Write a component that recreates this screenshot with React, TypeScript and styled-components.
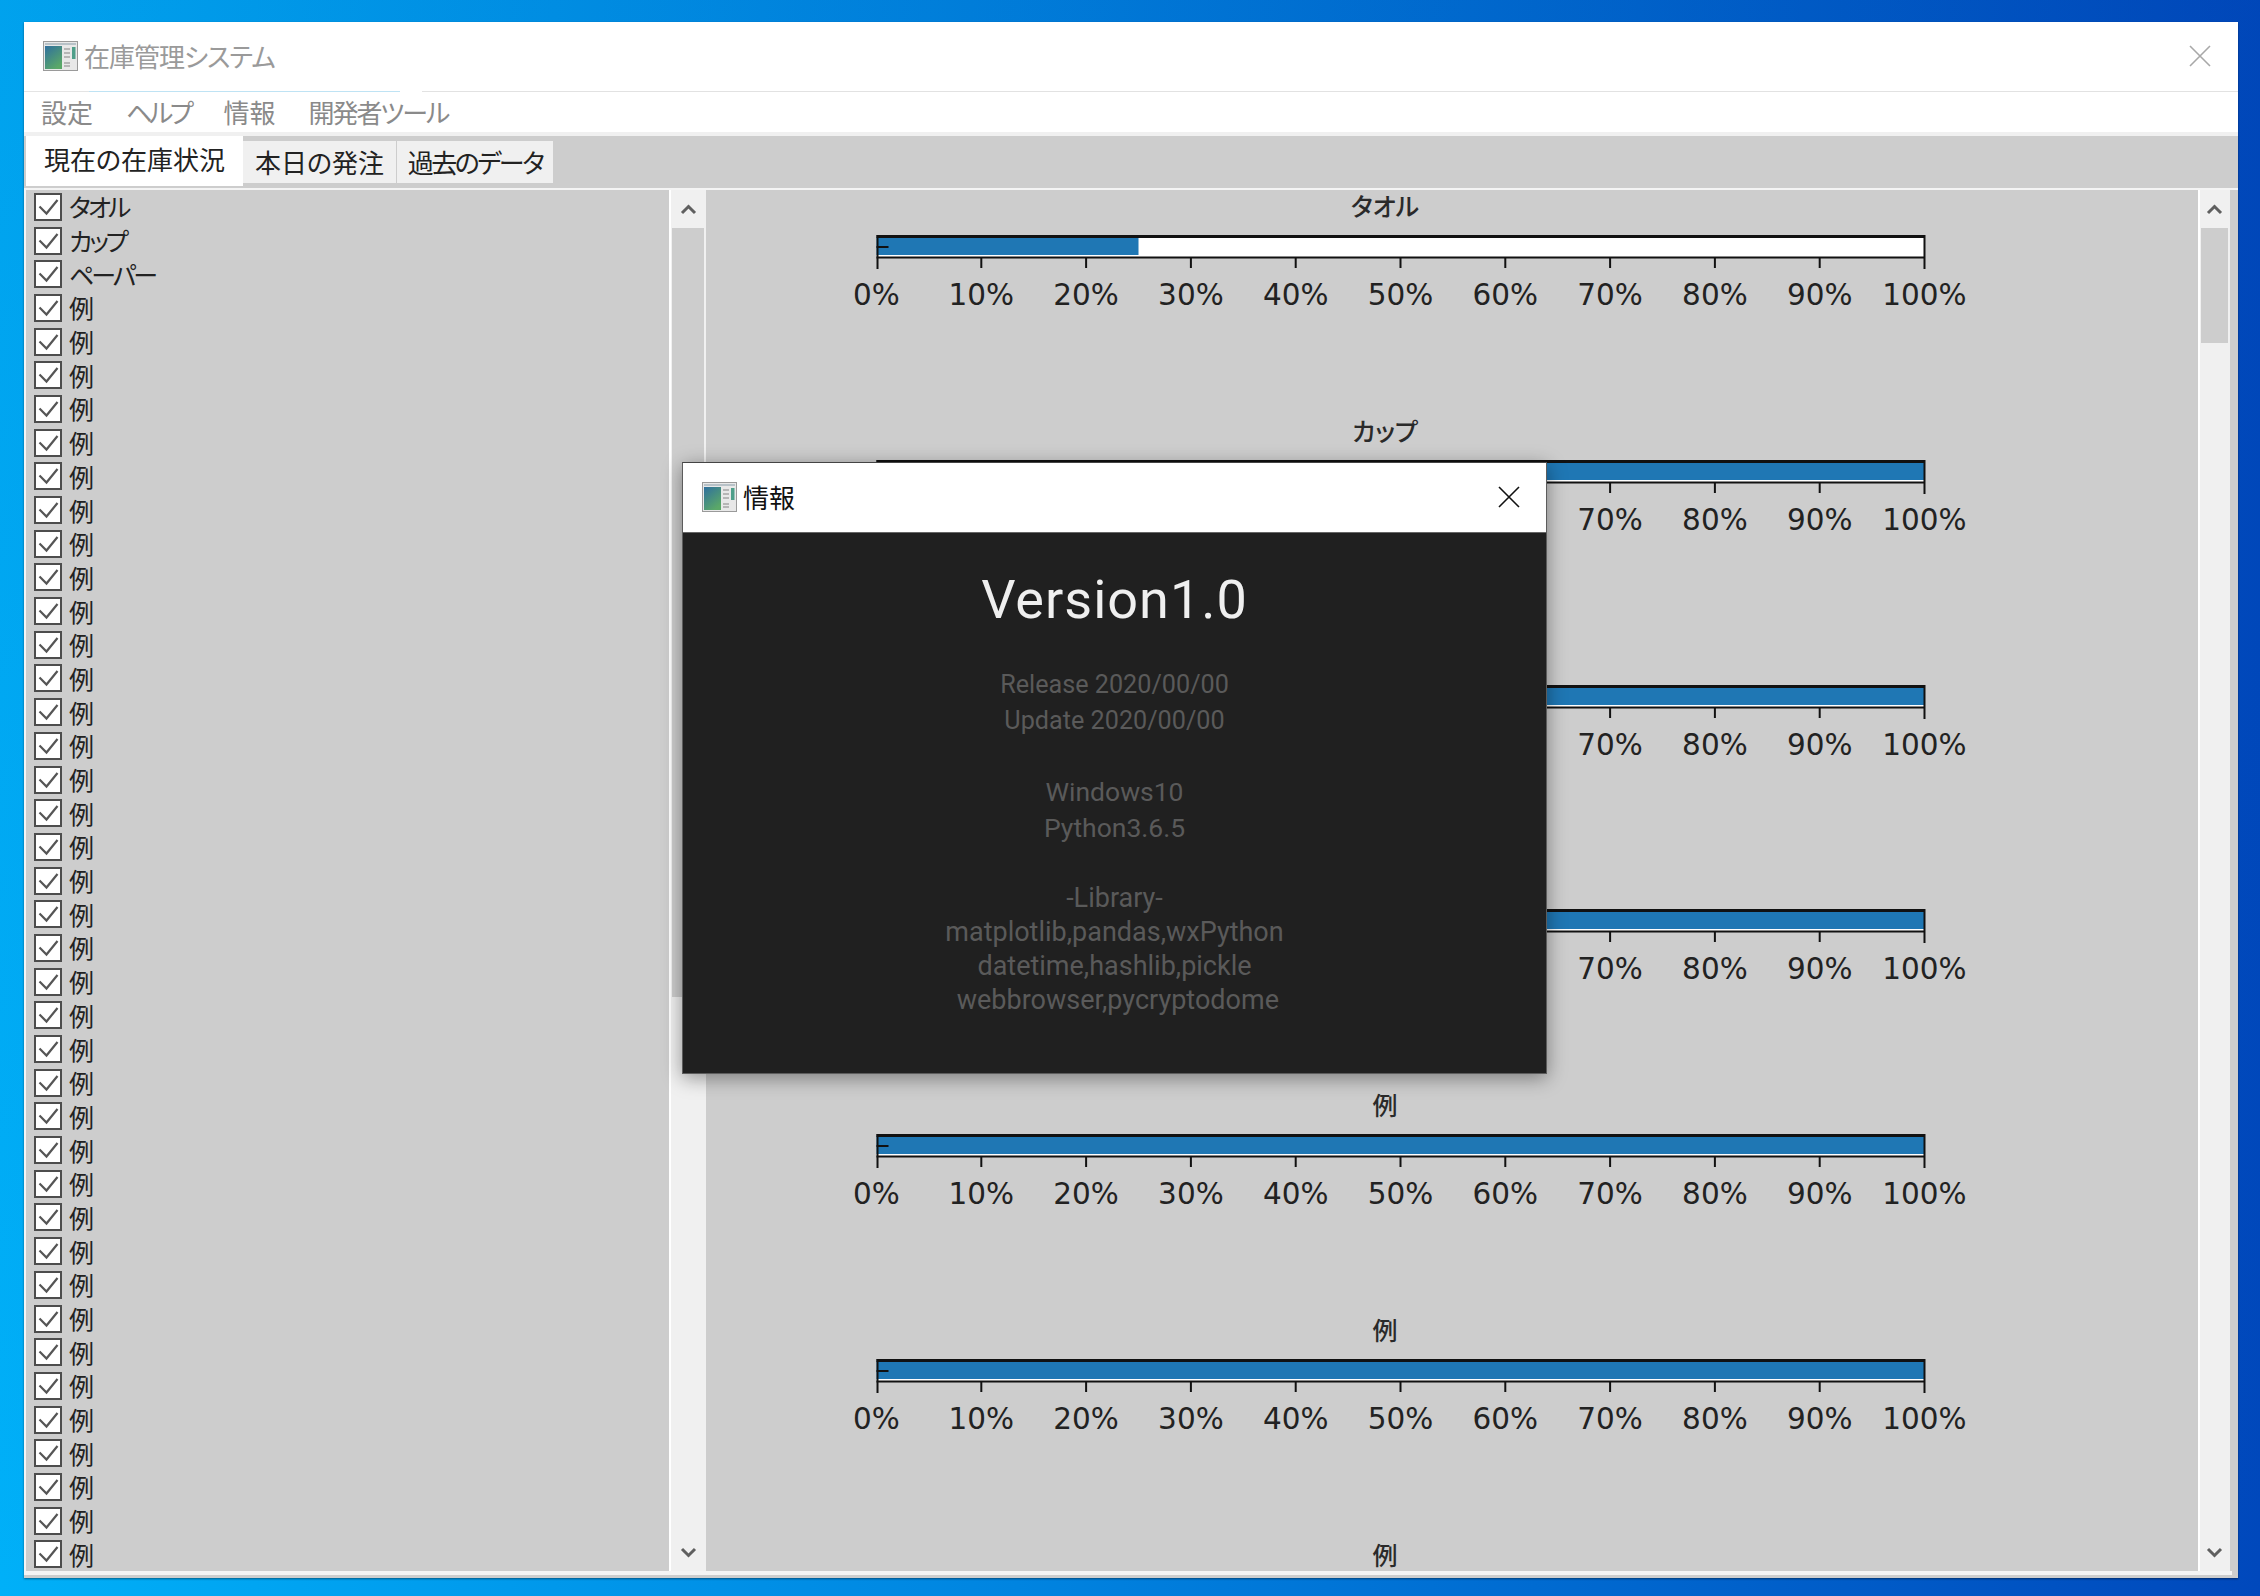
import React from "react";
import styled, { createGlobalStyle } from "styled-components";

const cjk = `"Noto Sans CJK JP", "Noto Sans", sans-serif`;

const Global = createGlobalStyle`
  *, *::before, *::after { box-sizing: border-box; }
  html, body { margin: 0; padding: 0; }
  body { width: 2260px; height: 1596px; overflow: hidden; font-family: ${cjk}; }
`;

const Desktop = styled.div`
  position: relative;
  width: 2260px;
  height: 1596px;
  padding: 22px 22px 18px 24px;
  background:
    linear-gradient(to bottom, rgba(0, 60, 160, 0.12), rgba(0, 60, 160, 0) 100%),
    linear-gradient(to right, #00b0f8 0%, #0084e0 45%, #0048bc 100%);
`;

const Window = styled.div`
  display: flex;
  flex-direction: column;
  height: 100%;
  background: #cdcdcd;
  box-shadow: 0 1px 2px rgba(0, 0, 0, 0.45);
`;

const TitleBar = styled.header`
  flex: 0 0 69px;
  display: flex;
  align-items: center;
  padding: 0 27px 2px 19px;
  gap: 6px;
  background: #fff;
  font-size: 26px;
  font-feature-settings: "palt";
`;

const TitleText = styled.span<{ $dark?: boolean }>`
  flex: 1;
  color: ${(p) => (p.$dark ? "#111" : "#9a9a9a")};
  letter-spacing: ${(p) => (p.$dark ? "0" : "-1px")};
  line-height: 1;
`;

const MenuBar = styled.nav`
  flex: 0 0 41px;
  display: flex;
  align-items: center;
  gap: 33px;
  padding: 0 0 0 17px;
  background: #fff;
  border-top: 1px solid;
  border-image: linear-gradient(to right, #e4e4e4 0 3%, #bfe3f4 3% 17%, #fff 17% 18%, #e2e2e2 18% 100%) 1;
  color: #8a8a8a;
  font-size: 26px;
  line-height: 1;
  font-feature-settings: "palt";
`;

const MenuItem = styled.span<{ $ls?: number }>`
  letter-spacing: ${(p) => p.$ls ?? 0}px;
`;

const MenuGap = styled.div`
  flex: 0 0 4px;
  background: #f0f0f0;
`;

const TabBar = styled.div`
  flex: 0 0 52px;
  display: flex;
  align-items: flex-end;
  padding: 0 0 2px 2px;
  font-feature-settings: "palt";
`;

const Tab = styled.div<{ $active?: boolean; $w: number; $ls?: number }>`
  display: flex;
  align-items: center;
  justify-content: center;
  flex: 0 0 ${(p) => p.$w}px;
  height: ${(p) => (p.$active ? "50px" : "42px")};
  margin-right: ${(p) => (p.$active ? "0" : "1px")};
  margin-bottom: ${(p) => (p.$active ? "0" : "3px")};
  padding-bottom: ${(p) => (p.$active ? "4px" : "0")};
  background: ${(p) => (p.$active ? "#fff" : "#f0f0f0")};
  color: #222;
  font-size: 26px;
  line-height: 1;
  letter-spacing: ${(p) => p.$ls ?? 0}px;
`;

const Content = styled.main`
  flex: 0 0 1380px;
  display: flex;
  border-top: 2px solid #f4f4f4;
  border-left: 2px solid #f4f4f4;
`;

const BottomEdge = styled.div`
  flex: 0 0 4px;
  margin-right: 6px;
  background: #f4f4f4;
`;

const ListPane = styled.div`
  flex: 0 0 643px;
  overflow: hidden;
  padding: 0 0 0 8px;
`;

const CheckRow = styled.label`
  display: flex;
  align-items: center;
  gap: 7px;
  height: 33.7px;
  color: #222;
  font-size: 25px;
  line-height: 1;
  font-feature-settings: "palt";
`;

const CheckLabel = styled.span`
  padding-right: 4px;
  letter-spacing: -3px;
`;

const Box = styled.span`
  flex: 0 0 auto;
  display: flex;
  align-items: center;
  justify-content: center;
  width: 28px;
  height: 28px;
  border: 2px solid #4d4d4d;
  background: #fff;
`;

const ScrollBar = styled.div<{ $w: number }>`
  flex: 0 0 ${(p) => p.$w}px;
  display: flex;
  flex-direction: column;
  padding: 0 2px 0 1px;
  border-left: 2px solid #fff;
  background: #f0f0f0;
`;

const ScrollArrow = styled.div`
  flex: 0 0 38px;
  display: flex;
  align-items: center;
  justify-content: center;
  margin-top: auto;
  &:first-child { margin-top: 0; }
`;

const Thumb = styled.div<{ $h: number }>`
  flex: 0 0 ${(p) => p.$h}px;
  background: #cdcdcd;
`;

const ChartPane = styled.div`
  flex: 0 0 1492px;
  height: 1378px;
`;

const ChartSvg = styled.svg`
  display: block;
  width: 1492px;
  overflow: visible;
`;

const ChartTitle = styled.text`
  font-family: ${cjk};
  font-size: 25px;
  font-weight: 500;
  fill: #2a2a2a;
  font-feature-settings: "palt";
  text-anchor: middle;
  dominant-baseline: central;
`;

const TickLabel = styled.text`
  font-family: "DejaVu Sans", sans-serif;
  font-size: 29.5px;
  fill: #222;
  text-anchor: middle;
`;

const RightEdge = styled.div`
  flex: 0 0 6px;
  background: #cdcdcd;
`;

const Dialog = styled.section`
  position: absolute;
  left: 682px;
  top: 462px;
  width: 865px;
  height: 612px;
  display: flex;
  flex-direction: column;
  border: 1px solid #5c5c5c;
  border-top-color: #444;
  box-shadow: 0 4px 18px rgba(0, 0, 0, 0.4);
  background: #202020;
`;

const DialogTitle = styled(TitleBar)`
  flex: 0 0 70px;
  padding: 0 26px 2px 19px;
  border-bottom: 1px solid #666;
`;

const DialogBody = styled.div`
  flex: 1;
  display: flex;
  flex-direction: column;
  align-items: center;
  padding-top: 33px;
  font-family: Roboto, sans-serif;
  color: #5a5a5a;
`;

const Version = styled.h1`
  margin: 0 0 33px;
  font-family: Roboto, sans-serif;
  font-weight: 400;
  font-size: 54px;
  line-height: 68px;
  letter-spacing: 1px;
  color: #efefef;
`;

const InfoGroup = styled.div<{ $lh: number; $fs: number }>`
  margin-bottom: 35px;
  font-size: ${(p) => p.$fs}px;
  font-weight: 400;
  line-height: ${(p) => p.$lh}px;
  text-align: center;
  white-space: pre;
`;

const AppIcon = () => (
  <svg width="35" height="30" viewBox="0 0 35 30" style={{ flex: "0 0 auto" }}>
    <defs>
      <linearGradient id="ico" x1="0" y1="0" x2="0.6" y2="1">
        <stop offset="0" stopColor="#2f6f9e" />
        <stop offset="1" stopColor="#5aa868" />
      </linearGradient>
    </defs>
    <rect x="0.5" y="0.5" width="34" height="29" fill="#e8e8e8" stroke="#9a9a9a" />
    <rect x="2" y="2" width="31" height="2" fill="#b8c2c8" />
    <rect x="2" y="5" width="17" height="23" fill="url(#ico)" />
    <path d="M21 8h6M21 12h6M21 16h6M21 22h6M21 25h6" stroke="#a5a5a5" strokeWidth="1.4" />
    <rect x="29" y="6" width="3.5" height="12" fill="#4f9f8a" />
  </svg>
);

const CloseIcon = ({ color }: { color: string }) => (
  <svg width="22" height="22" viewBox="0 0 22 22">
    <path d="M1 1l20 20M21 1L1 21" stroke={color} strokeWidth="1.6" fill="none" />
  </svg>
);

const Chevron = ({ down }: { down?: boolean }) => (
  <svg width="17" height="11" viewBox="0 0 17 11">
    <path
      d={down ? "M2 2l6.5 6.5L15 2" : "M2 9l6.5-6.5L15 9"}
      stroke="#5f5f5f"
      strokeWidth="3"
      fill="none"
    />
  </svg>
);

const Check = () => (
  <svg width="21" height="18" viewBox="0 0 21 18">
    <path d="M1.5 8.5l7 7L19.5 2" stroke="#555" strokeWidth="2.2" fill="none" />
  </svg>
);

const X0 = 170.5;
const BAR_W = 1048;
const PERIOD = 224.8;

type ChartProps = { title?: string; value?: number; labelFrom?: number; titleOnly?: boolean };

const BarChart = ({ title, value = 100, labelFrom = 0, titleOnly }: ChartProps) => {
  const ticks = Array.from({ length: 11 }, (_, i) => i * 10);
  const h = titleOnly ? 29 : PERIOD;
  return (
    <ChartSvg height={h} viewBox={`0 0 1492 ${h}`}>
      {title && <ChartTitle x={679} y={15}>{title}</ChartTitle>}
      {!titleOnly && (
        <>
          <rect x={X0} y={47} width={BAR_W} height={20} fill="#fff" />
          <rect x={X0} y={47} width={(BAR_W * value) / 100} height={18} fill="#1f77b4" />
          <path d={`M${X0} 46.5H${X0 + BAR_W}`} stroke="#111" strokeWidth="3" />
          <path d={`M${X0} 67.5H${X0 + BAR_W}`} stroke="#111" strokeWidth="2" />
          <path d={`M${X0 + 1} 45V79`} stroke="#111" strokeWidth="2" />
          <path d={`M${X0 + BAR_W} 45V79`} stroke="#111" strokeWidth="2" />
          <path d={`M${X0} 57H${X0 + 12}`} stroke="#111" strokeWidth="2" />
          {ticks.slice(1, 10).map((t) => (
            <path key={t} d={`M${X0 + (BAR_W * t) / 100} 67V78`} stroke="#111" strokeWidth="2" />
          ))}
          {ticks.filter((t) => t >= labelFrom).map((t) => (
            <TickLabel key={t} x={X0 + (BAR_W * t) / 100} y={115}>{`${t}%`}</TickLabel>
          ))}
        </>
      )}
    </ChartSvg>
  );
};

const items = ["タオル", "カップ", "ペーパー", ...Array(38).fill("例")];

export default function App() {
  return (
    <>
      <Global />
      <Desktop>
        <Window>
          <TitleBar>
            <AppIcon />
            <TitleText>在庫管理システム</TitleText>
            <CloseIcon color="#a8a8a8" />
          </TitleBar>
          <MenuBar>
            <MenuItem>設定</MenuItem>
            <MenuItem $ls={-3.4}>ヘルプ</MenuItem>
            <MenuItem>情報</MenuItem>
            <MenuItem $ls={-2}>開発者ツール</MenuItem>
          </MenuBar>
          <MenuGap />
          <TabBar>
            <Tab $active $w={217}>現在の在庫状況</Tab>
            <Tab $w={153}>本日の発注</Tab>
            <Tab $w={156} $ls={-2.5}>過去のデータ</Tab>
          </TabBar>
          <Content>
            <ListPane>
              {items.map((t, i) => (
                <CheckRow key={i}>
                  <Box><Check /></Box>
                  <CheckLabel>{t}</CheckLabel>
                </CheckRow>
              ))}
            </ListPane>
            <ScrollBar $w={37}>
              <ScrollArrow><Chevron /></ScrollArrow>
              <Thumb $h={769} />
              <ScrollArrow><Chevron down /></ScrollArrow>
            </ScrollBar>
            <ChartPane>
              <BarChart title="タオル" value={25} />
              <BarChart title="カップ" labelFrom={70} />
              <BarChart labelFrom={70} />
              <BarChart labelFrom={70} />
              <BarChart title="例" />
              <BarChart title="例" />
              <BarChart title="例" titleOnly />
            </ChartPane>
            <ScrollBar $w={32}>
              <ScrollArrow><Chevron /></ScrollArrow>
              <Thumb $h={115} />
              <ScrollArrow><Chevron down /></ScrollArrow>
            </ScrollBar>
            <RightEdge />
          </Content>
          <BottomEdge />
        </Window>
        <Dialog>
          <DialogTitle>
            <AppIcon />
            <TitleText $dark>情報</TitleText>
            <CloseIcon color="#111" />
          </DialogTitle>
          <DialogBody>
            <Version>Version1.0</Version>
            <InfoGroup $lh={36} $fs={25.2}>{"Release 2020/00/00\nUpdate 2020/00/00"}</InfoGroup>
            <InfoGroup $lh={36} $fs={26.5}>{"Windows10\nPython3.6.5"}</InfoGroup>
            <InfoGroup $lh={34} $fs={27}>
              {"-Library-\nmatplotlib,pandas,wxPython\ndatetime,hashlib,pickle\n webbrowser,pycryptodome"}
            </InfoGroup>
          </DialogBody>
        </Dialog>
      </Desktop>
    </>
  );
}
